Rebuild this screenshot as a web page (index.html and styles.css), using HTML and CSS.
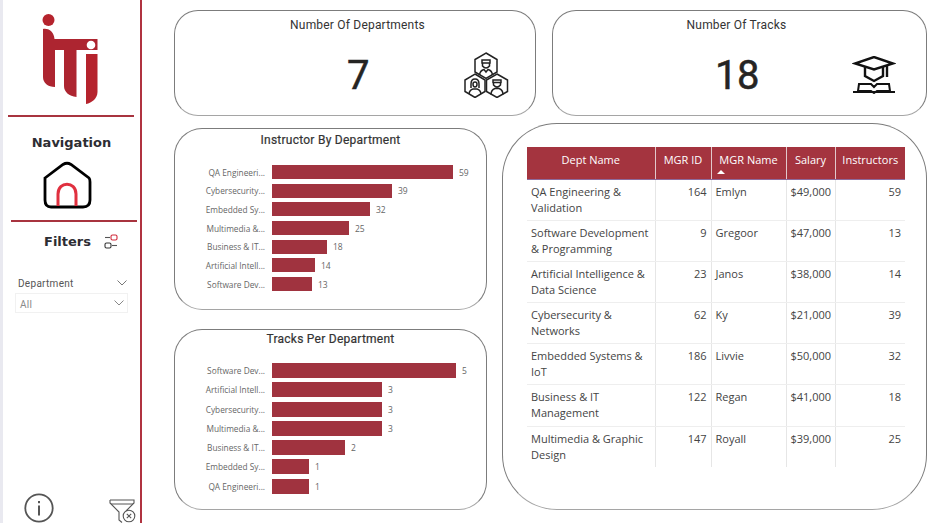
FILE: index.html
```html
<!DOCTYPE html>
<html lang="en">
<head>
    <meta charset="UTF-8">
    <meta name="viewport" content="width=device-width, initial-scale=1.0">
    <title>ITI Dashboard</title>
    <link rel="stylesheet" href="styles.css">
</head>
<body>
<div class="page">
    <aside class="sidebar">
        <div class="logo-wrap">
            <svg class="logo" width="60" height="94" viewBox="40 12 60 94">
                <circle cx="48.5" cy="20" r="6" fill="#b5232d"/>
                <path d="M43 29 C50 28 54 33 54.5 39 L97.5 39 L97.5 50 L76.5 50 L76.5 97 C69 96 64 92 64 86 L64 50 L55 50 L55 87 C48 87 43 83 43 77 Z" fill="#ad2530"/>
                <path d="M86 54 L97.5 54 L97.5 92 C97.5 98 92 103 86 104 Z" fill="#b5232d"/>
                <circle cx="91" cy="45" r="4.3" fill="#fff"/>
            </svg>
        </div>
        <div class="side-rule"></div>
        <h2 class="side-title nav-title">Navigation</h2>
        <svg class="home" width="50" height="48" viewBox="0 0 50 48">
            <path d="M3 17 L21 3.500 Q25 1 29 3.500 L47 17 Q48 18 48 21 L48 39 Q48 46 41 46 L9 46 Q3 46 3 39 L3 21 Q3 18 3 17 Z" fill="none" stroke="#000" stroke-width="2.800"/>
            <path d="M16 45 L16 33 C16 20 34 20 34 33 L34 45" fill="none" stroke="#e0303f" stroke-width="3"/>
        </svg>
        <div class="side-rule rule-two"></div>
        <div class="filters-head">
            <h2 class="side-title">Filters</h2>
            <svg width="16" height="15" viewBox="0 0 16 15">
                <rect x="8" y="1" width="6" height="5" rx="1.500" fill="none" stroke="#d0293a" stroke-width="1.100"/>
                <path d="M2 3.500 H7" stroke="#555" stroke-width="1.100"/>
                <rect x="2" y="9" width="6" height="5" rx="1.500" fill="none" stroke="#333" stroke-width="1.100"/>
                <path d="M9 11.500 H14" stroke="#555" stroke-width="1.100"/>
            </svg>
        </div>
        <div class="slicer-label">
            <span>Department</span>
            <svg class="chev" width="10" height="6" viewBox="0 0 10 6"><path d="M.5 .5 L5 5 L9.500 .5" fill="none" stroke="#777"/></svg>
        </div>
        <div class="slicer-box">
            <span class="slicer-value">All</span>
            <svg class="chev" width="10" height="6" viewBox="0 0 10 6"><path d="M.5 .5 L5 5 L9.500 .5" fill="none" stroke="#888"/></svg>
        </div>
        <div class="side-bottom">
            <svg width="30" height="30" viewBox="0 0 30 30">
                <circle cx="15" cy="15" r="13.700" fill="none" stroke="#555" stroke-width="1.800"/>
                <rect x="14" y="12.500" width="2" height="10" fill="#555"/>
                <rect x="14" y="8" width="2" height="2.200" fill="#555"/>
            </svg>
            <svg class="clear-icon" width="27" height="24" viewBox="0 0 27 24">
                <path d="M1 1 H25 V4 L17 12 M1 1 V4 L10 13 V21 L13 23.500" fill="none" stroke="#555" stroke-width="1.100"/>
                <path d="M2 5 H24" stroke="#555" stroke-width="1"/>
                <circle cx="20" cy="17" r="5.800" fill="#fff" stroke="#555" stroke-width="1.100"/>
                <path d="M17.800 14.800 L22.200 19.200 M22.200 14.800 L17.800 19.200" stroke="#555" stroke-width="1.100"/>
            </svg>
        </div>
    </aside>

    <main class="main">
        <div class="kpi-row">
            <section class="card kpi kpi-dept">
                <h3 class="kpi-title">Number Of Departments</h3>
                <div class="kpi-body">
                    <span></span>
                    <span class="kpi-value val-dept">7</span>
                    <svg class="kpi-icon" width="46" height="46" viewBox="0 0 46 46" fill="none" stroke="#222" stroke-width="1.500">
                        <path d="M22 1 L33 7.500 L33 20 L22 26.500 L11 20 L11 7.500 Z"/>
                        <path d="M11 22 L21 28 L21 39.500 L11 45.500 L1 39.500 L1 28 Z" fill="#fff"/>
                        <path d="M33 22 L43.500 28 L43.500 39.500 L33 45.500 L22.500 39.500 L22.500 28 Z" fill="#fff"/>
                        <path d="M18 8 H26 V11 H18 Z M18.500 11 V14 Q22 18 25.500 14 V11 M15.500 23 Q16 18.500 20 17.500 L22 20 L24 17.500 Q28 18.500 28.500 23"/>
                        <path d="M7 36 V32 Q7 27 11 27 Q15 27 15 32 V36 M9 32 Q9 30 11 30 Q13 30 13 32 Q13 35 11 35 Q9 35 9 32 Z M5 42 Q5.500 38 9 37 H13 Q16.500 38 17 42"/>
                        <path d="M29 28 H37 V30.500 H29 Z M29.500 30.500 V33 Q33 37 36.500 33 V30.500 M27 42.500 Q27 38 31 36.500 H35 Q39 38 39 42.500"/>
                    </svg>
                </div>
            </section>
            <section class="card kpi kpi-track">
                <h3 class="kpi-title">Number Of Tracks</h3>
                <div class="kpi-body">
                    <span></span>
                    <span class="kpi-value val-track">18</span>
                    <svg class="kpi-icon icon-track" width="44" height="38" viewBox="0 0 44 38" fill="none" stroke="#111" stroke-width="2.400">
                        <path d="M22 1 L41 7.500 L22 13.500 L3 7.500 Z"/>
                        <path d="M13 11 V20 L22 25 L31 20 V11"/>
                        <path d="M35 9 V21" />
                        <path d="M7 28 H19 L22 31 L25 28 H37 L38 35 H25 L22 37 L19 35 H6 Z" stroke-width="2"/>
                        <path d="M1 36 H43" stroke-width="2"/>
                    </svg>
                </div>
            </section>
        </div>

        <div class="lower-row">
            <div class="charts">
                <section class="card chart chart-instr">
                    <h3 class="chart-title">Instructor By Department</h3>
                    <div class="bars">
                        <div class="bar-row"><span class="bar-label">QA Engineeri...</span><span class="bar" style="width:181px"></span><span class="bar-val">59</span></div>
                        <div class="bar-row"><span class="bar-label">Cybersecurity...</span><span class="bar" style="width:120px"></span><span class="bar-val">39</span></div>
                        <div class="bar-row"><span class="bar-label">Embedded Sy...</span><span class="bar" style="width:98px"></span><span class="bar-val">32</span></div>
                        <div class="bar-row"><span class="bar-label">Multimedia &amp;...</span><span class="bar" style="width:77px"></span><span class="bar-val">25</span></div>
                        <div class="bar-row"><span class="bar-label">Business &amp; IT...</span><span class="bar" style="width:55px"></span><span class="bar-val">18</span></div>
                        <div class="bar-row"><span class="bar-label">Artificial Intell...</span><span class="bar" style="width:43px"></span><span class="bar-val">14</span></div>
                        <div class="bar-row"><span class="bar-label">Software Dev...</span><span class="bar" style="width:40px"></span><span class="bar-val">13</span></div>
                    </div>
                </section>
                <section class="card chart chart-tracks">
                    <h3 class="chart-title">Tracks Per Department</h3>
                    <div class="bars">
                        <div class="bar-row"><span class="bar-label">Software Dev...</span><span class="bar" style="width:184px"></span><span class="bar-val">5</span></div>
                        <div class="bar-row"><span class="bar-label">Artificial Intell...</span><span class="bar" style="width:110px"></span><span class="bar-val">3</span></div>
                        <div class="bar-row"><span class="bar-label">Cybersecurity...</span><span class="bar" style="width:110px"></span><span class="bar-val">3</span></div>
                        <div class="bar-row"><span class="bar-label">Multimedia &amp;...</span><span class="bar" style="width:110px"></span><span class="bar-val">3</span></div>
                        <div class="bar-row"><span class="bar-label">Business &amp; IT...</span><span class="bar" style="width:73px"></span><span class="bar-val">2</span></div>
                        <div class="bar-row"><span class="bar-label">Embedded Sy...</span><span class="bar" style="width:37px"></span><span class="bar-val">1</span></div>
                        <div class="bar-row"><span class="bar-label">QA Engineeri...</span><span class="bar" style="width:37px"></span><span class="bar-val">1</span></div>
                    </div>
                </section>
            </div>

            <section class="card table-card">
                <table class="dept-table">
                    <colgroup>
                        <col class="c-name"><col class="c-id"><col class="c-mgr"><col class="c-sal"><col class="c-ins">
                    </colgroup>
                    <thead>
                        <tr>
                            <th>Dept Name</th>
                            <th>MGR ID</th>
                            <th class="sorted">MGR Name<span class="sort-arrow"></span></th>
                            <th>Salary</th>
                            <th>Instructors</th>
                        </tr>
                    </thead>
                    <tbody>
                        <tr><td>QA Engineering &amp; Validation</td><td class="num">164</td><td>Emlyn</td><td class="num">$49,000</td><td class="num">59</td></tr>
                        <tr><td>Software Development &amp; Programming</td><td class="num">9</td><td>Gregoor</td><td class="num">$47,000</td><td class="num">13</td></tr>
                        <tr><td>Artificial Intelligence &amp; Data Science</td><td class="num">23</td><td>Janos</td><td class="num">$38,000</td><td class="num">14</td></tr>
                        <tr><td>Cybersecurity &amp; Networks</td><td class="num">62</td><td>Ky</td><td class="num">$21,000</td><td class="num">39</td></tr>
                        <tr><td>Embedded Systems &amp; IoT</td><td class="num">186</td><td>Livvie</td><td class="num">$50,000</td><td class="num">32</td></tr>
                        <tr><td>Business &amp; IT Management</td><td class="num">122</td><td>Regan</td><td class="num">$41,000</td><td class="num">18</td></tr>
                        <tr><td>Multimedia &amp; Graphic Design</td><td class="num">147</td><td>Royall</td><td class="num">$39,000</td><td class="num">25</td></tr>
                    </tbody>
                </table>
            </section>
        </div>
    </main>
</div>
</body>
</html>
```

FILE: styles.css
```css
*{
    padding: 0;
    margin: 0;
    box-sizing: border-box;
}

html, body{
    width: 100%;
    height: 100%;
    overflow: hidden;
    background: #fff;
}

body{
    font-family: "Open Sans", Arial, sans-serif;
    color: #333;
}

.page{
    display: flex;
    width: 928px;
    height: 523px;
}

/* left navigation */

.sidebar{
    width: 142px;
    height: 523px;
    flex: none;
    display: flex;
    flex-direction: column;
    border-left: 3px solid #e9e9f0;
    border-right: 2px solid #b03340;
}

.logo-wrap{
    height: 115px;
    padding: 12px 0 0 37px;
}

.logo{
    display: block;
}

.side-rule{
    height: 2px;
    width: 126px;
    margin-left: 5px;
    background: #a8343f;
    flex: none;
}

.rule-two{
    margin-left: 8px;
    margin-top: 11px;
}

.side-title{
    font-family: "DejaVu Sans", Arial, sans-serif;
    font-size: 13px;
    font-weight: 700;
    color: #2d2d33;
}

.nav-title{
    text-align: center;
    margin-top: 18px;
    line-height: 16px;
}

.home{
    display: block;
    margin: 10px 0 0 39px;
    flex: none;
}

.filters-head{
    display: flex;
    align-items: center;
    gap: 12px;
    margin: 11px 0 0 41px;
    height: 16px;
}

.slicer-label{
    display: flex;
    justify-content: space-between;
    align-items: center;
    width: 109px;
    margin: 27px 0 0 15px;
    height: 14px;
    font-family: Roboto, Arial, sans-serif;
    font-size: 10px;
    letter-spacing: .3px;
    color: #555;
}

.slicer-box{
    display: flex;
    justify-content: space-between;
    align-items: center;
    width: 113px;
    height: 20px;
    margin: 3px 0 0 12px;
    padding: 0 3px 0 4px;
    border: 1px solid #f1f1f1;
    font-family: Roboto, Arial, sans-serif;
    font-size: 10px;
    letter-spacing: .3px;
    color: #8a8a8a;
}

.slicer-value{
    padding-top: 3px;
}

.side-bottom{
    margin-top: auto;
    display: flex;
    align-items: flex-end;
    padding-left: 21px;
    height: 31px;
}

.clear-icon{
    margin-left: 55px;
}

/* main area */

.main{
    flex: 1;
    padding: 10px 0 0 32px;
    min-width: 0;
}

.card{
    background: #fff;
    border: 1px solid #7c7c7c;
    border-bottom-color: #a5a5a5;
}

.kpi-row{
    display: flex;
    gap: 16px;
}

.kpi{
    height: 106px;
    border-radius: 24px;
}

.kpi-dept{
    width: 362px;
}

.kpi-track{
    width: 375px;
}

.kpi-title{
    font-family: Roboto, Arial, sans-serif;
    font-size: 12px;
    font-weight: 400;
    letter-spacing: .2px;
    color: #333;
    text-align: center;
    margin-top: 6px;
    line-height: 16px;
}

.kpi-dept .kpi-title{
    padding-left: 5px;
}

.kpi-track .kpi-title{
    padding-right: 6px;
}

.kpi-body{
    display: grid;
    grid-template-columns: 1fr auto 1fr;
    align-items: center;
    height: 60px;
    margin-top: 12px;
}

.kpi-value{
    font-family: Roboto, Arial, sans-serif;
    font-size: 40px;
    font-weight: 400;
    letter-spacing: -.5px;
    line-height: 46px;
    color: #252423;
    -webkit-text-stroke: .5px #252423;
    padding-top: 2px;
}

.val-dept{
    padding-left: 6px;
}

.val-track{
    padding-right: 5px;
}

.kpi-icon{
    justify-self: end;
    margin-right: 25px;
}

.icon-track{
    margin-right: 30px;
}

.lower-row{
    display: flex;
    gap: 15px;
    margin-top: 7px;
}

.charts{
    display: flex;
    flex-direction: column;
    gap: 19px;
    width: 313px;
    padding-top: 5px;
}

.chart{
    border-radius: 28px;
}

.chart-instr{
    height: 182px;
}

.chart-tracks{
    height: 181px;
}

.chart-title{
    font-family: Roboto, Arial, sans-serif;
    font-size: 12px;
    font-weight: 400;
    letter-spacing: .25px;
    color: #333;
    -webkit-text-stroke: .2px #333;
    text-align: center;
    line-height: 14px;
}

.chart-instr .chart-title{
    margin-top: 4px;
}

.chart-tracks .chart-title{
    margin-top: 2px;
}

.bars{
    display: flex;
    flex-direction: column;
}

.chart-instr .bars{
    margin-top: 18px;
    gap: 4.700px;
}

.chart-instr .bar{
    height: 14px;
}

.chart-tracks .bars{
    margin-top: 17px;
    gap: 4.300px;
}

.chart-tracks .bar{
    height: 15px;
}

.bar-row{
    display: flex;
    align-items: center;
}

.bar-label{
    width: 90px;
    flex: none;
    text-align: right;
    font-size: 8.300px;
    color: #666;
    white-space: nowrap;
}

.bar{
    display: block;
    margin-left: 7px;
    background: #a0333f;
}

.bar-val{
    margin-left: 6px;
    font-size: 8.500px;
    color: #666;
}

/* manager table */

.table-card{
    width: 425px;
    height: 387px;
    border-radius: 55px;
    padding: 23px 0 0 24px;
}

.dept-table{
    border-collapse: collapse;
    table-layout: fixed;
    width: 378px;
}

.c-name{ width: 128px; }
.c-id{ width: 56px; }
.c-mgr{ width: 75px; }
.c-sal{ width: 49px; }
.c-ins{ width: 70px; }

.dept-table th{
    height: 32px;
    padding-bottom: 6px;
    background: #a4343f;
    color: #fff;
    font-size: 11px;
    font-weight: 400;
    text-align: center;
    white-space: nowrap;
    border-right: 1px solid #e2c9cc;
    border-bottom: 1px solid #8d6a9c;
}

.dept-table th:last-child{
    border-right: none;
}

.dept-table th.sorted{
    position: relative;
}

.sort-arrow{
    position: absolute;
    left: 5px;
    bottom: 5px;
    border-left: 4px solid transparent;
    border-right: 4px solid transparent;
    border-bottom: 4px solid #fff;
}

.dept-table td{
    height: 41.200px;
    padding: 4px 4px 0;
    vertical-align: top;
    font-size: 11px;
    line-height: 16px;
    color: #444;
    border-right: 1px solid #e6e6e6;
    border-bottom: 1px solid #eee;
}

.dept-table td:last-child{
    border-right: none;
}

.dept-table tr:last-child td{
    border-bottom: none;
}

.dept-table td.num{
    text-align: right;
}
```
